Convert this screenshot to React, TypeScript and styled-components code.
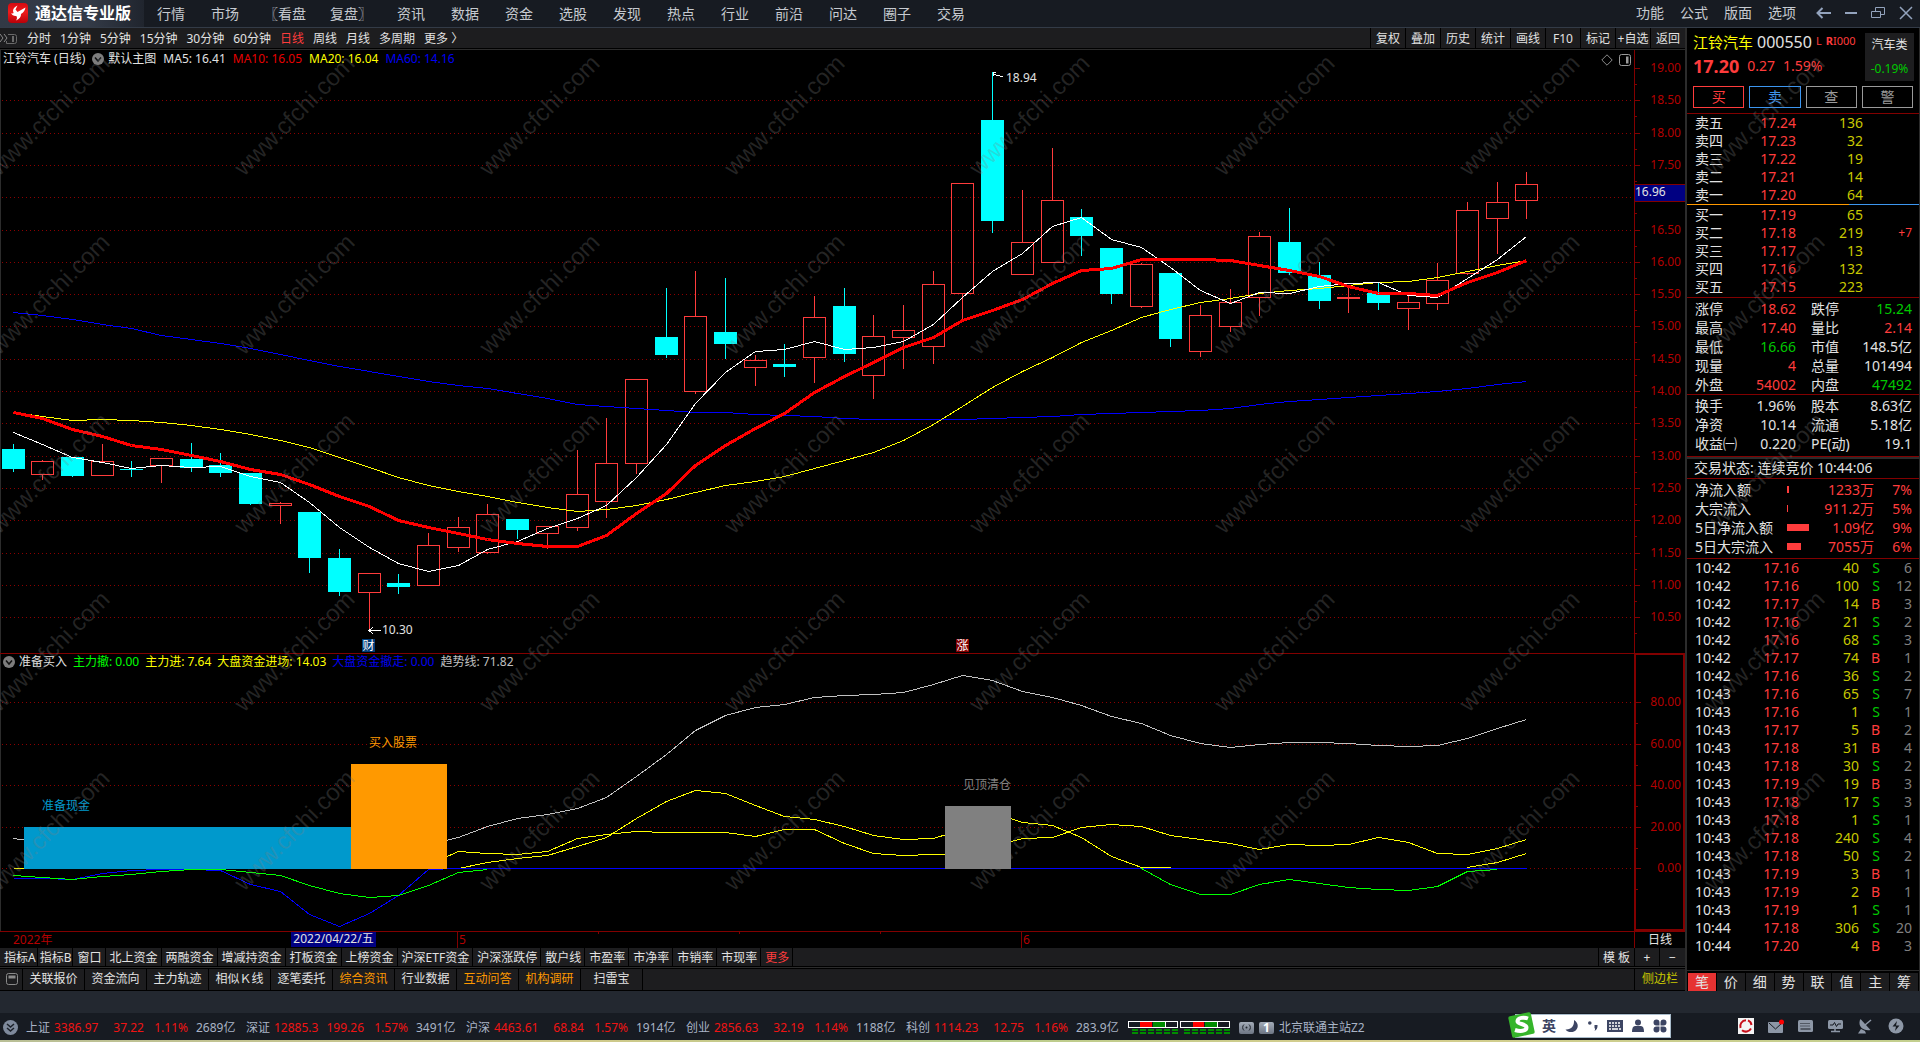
import React from "react";
import styled, { createGlobalStyle, css } from "styled-components";

/* ---------- palette ---------- */
const c = {
  red: "#ff3c3c",
  deepRed: "#b40000",
  rule: "#820000",
  cyan: "#00ffff",
  yellow: "#ffff00",
  olive: "#c8c800",
  green: "#00c800",
  lime: "#00ff00",
  blue: "#0000ff",
  link: "#3c96f0",
  orange: "#ff9900",
  text: "#e2e2e2",
  gray: "#808080",
  panel: "#1d1d1f",
  line: "#2c2c2c",
};

const GlobalStyle = createGlobalStyle`
  * { box-sizing: border-box; }
  html, body { margin: 0; background: #000; }
  body {
    font-family: "Noto Sans", "Noto Sans CJK SC", sans-serif;
    font-size: 12px;
    line-height: 16px;
    color: ${c.text};
  }
  button { font: inherit; color: inherit; background: none; border: 0; padding: 0; margin: 0; white-space: nowrap; cursor: pointer; }
  table { border-collapse: collapse; border-spacing: 0; width: 100%; table-layout: fixed; }
  td, th { padding: 0; font-weight: 400; white-space: nowrap; }
  svg { display: block; }
`;

/* ---------- page frame ---------- */
const Page = styled.div`
  display: flex;
  flex-direction: column;
  min-height: 100vh;
  background: #000;
`;

const TitleBar = styled.header`
  display: flex;
  align-items: stretch;
  height: 28px;
  flex: none;
  background: #171b22;
  border-bottom: 1px solid #333b47;
`;
const Brand = styled.div`
  display: flex;
  align-items: center;
  gap: 7px;
  width: 144px;
  padding: 0 0 2px 8px;
  background: linear-gradient(90deg, #323945, #343b48 60%, #20252e);
  font-size: 16px;
  font-weight: 700;
  color: #fff;
  white-space: nowrap;
`;
const Menu = styled.nav`
  display: flex;
  align-items: center;
  font-size: 14px;
  line-height: 20px;
  color: #c6cad0;
`;
const MenuItem = styled.button<{ $wide?: boolean }>`
  padding: 0 ${(p) => (p.$wide ? 12 : 13)}px;
`;
const RightMenu = styled(Menu)`
  margin-left: auto;
  gap: 16px;
  padding: 0 6px 2px 0;
`;
const WindowButtons = styled.div`
  display: flex;
  align-items: center;
  gap: 12px;
  margin-left: 4px;
  color: #93a3bd;
`;

const Workspace = styled.main`
  position: relative;
  display: flex;
  flex: 1 1 auto;
  min-height: 700px;
`;
const ChartColumn = styled.section`
  display: flex;
  flex-direction: column;
  flex: 1 1 auto;
  min-width: 0;
  border-right: 2px solid ${c.line};
`;

/* ---------- period toolbar ---------- */
const PeriodBar = styled.div`
  display: flex;
  align-items: stretch;
  flex: none;
  height: 22px;
  background: ${c.panel};
  border-bottom: 1px solid ${c.line};
  box-shadow: inset 0 -1px 0 #000;
`;
const Periods = styled.div`
  display: flex;
  align-items: center;
  gap: 9px;
`;
const PeriodIcon = styled.span`
  width: 18px;
`;
const Period = styled.button<{ $on?: boolean }>`
  color: ${(p) => (p.$on ? c.red : c.text)};
`;
const Tools = styled.div`
  display: flex;
  margin-left: auto;
`;
const Tool = styled.button`
  width: 35px;
  border-left: 1px solid #000;
  overflow: hidden;
`;

/* ---------- plots ---------- */
const PlotRow = styled.div<{ $grow: number }>`
  display: flex;
  flex: ${(p) => p.$grow} 1 0;
  min-height: 0;
`;
const Plot = styled.div`
  position: relative;
  flex: 1 1 auto;
  min-width: 0;
  > svg { position: absolute; inset: 0; width: 100%; height: 100%; }
`;
const Legend = styled.div<{ $tight?: boolean }>`
  position: relative;
  display: flex;
  align-items: center;
  gap: ${(p) => (p.$tight ? 6 : 7)}px;
  padding: 1px 3px;
  white-space: nowrap;
`;
const LegendTitle = styled.span`
  display: flex;
  align-items: center;
  gap: 4px;
`;
const Key = styled.span<{ $color?: string }>`
  color: ${(p) => p.$color || c.text};
`;
const LegendTools = styled.div`
  position: absolute;
  top: 4px;
  right: 3px;
  display: flex;
  align-items: center;
  gap: 6px;
`;
const Note = styled.span<{ $color?: string }>`
  position: absolute;
  transform: translateY(-50%);
  color: ${(p) => p.$color || c.text};
  white-space: nowrap;
`;
const Badge = styled.span<{ $bg: string }>`
  position: absolute;
  width: 13px;
  height: 13px;
  line-height: 13px;
  text-align: center;
  background: ${(p) => p.$bg};
  color: #fff;
`;
const Axis = styled.div<{ $boxed?: boolean }>`
  position: relative;
  flex: none;
  width: 51px;
  color: ${c.deepRed};
  border: 0 solid ${c.rule};
  ${(p) => (p.$boxed ? css`border-width: 2px;` : css`border-left-width: 1px;`)}
  > svg { position: absolute; inset: 0; width: 6px; height: 100%; overflow: visible; }
`;
const AxisLabel = styled.span<{ $boxed?: boolean }>`
  position: absolute;
  right: ${(p) => (p.$boxed ? 2 : 4)}px;
  transform: translateY(-50%);
`;
const AxisCursor = styled.span`
  position: absolute;
  left: 0;
  right: 0;
  height: 18px;
  line-height: 14px;
  transform: translateY(-50%);
  background: #000082;
  border: 1px solid ${c.rule};
  border-width: 1px 0;
  color: ${c.text};
`;

const DateRow = styled.div`
  display: flex;
  flex: none;
  height: 17px;
  border-top: 1px solid ${c.rule};
  color: ${c.deepRed};
`;
const DateTrack = styled.div`
  position: relative;
  flex: 1 1 auto;
`;
const DateTick = styled.span<{ $minor?: boolean }>`
  position: absolute;
  top: 0;
  height: ${(p) => (p.$minor ? 2 : 16)}px;
  padding-left: 1px;
  border-left: 1px solid ${c.rule};
`;
const DateText = styled.span`
  position: absolute;
  top: 0;
`;
const DateCursor = styled.span`
  position: absolute;
  top: 0;
  width: 85px;
  height: 15px;
  line-height: 14px;
  text-align: center;
  background: #000082;
  color: ${c.text};
`;
const DateUnit = styled.div`
  width: 51px;
  flex: none;
  border-left: 1px solid ${c.rule};
  color: ${c.text};
  text-align: center;
`;

/* ---------- bottom tab strips ---------- */
const Strip = styled.div<{ $tall?: boolean }>`
  display: flex;
  flex: none;
  height: ${(p) => (p.$tall ? 23 : 20)}px;
  padding-left: 2px;
  border-bottom: 1px solid ${(p) => (p.$tall ? "#000" : c.line)};
  background: ${c.panel};
  box-shadow: inset 0 ${(p) => (p.$tall ? "1px" : "-1px")} 0 #000;
`;
const StripTab = styled.button<{ $color?: string; $pad?: number }>`
  padding: 0 ${(p) => (p.$pad || 4) - 1}px 0 ${(p) => p.$pad || 4}px;
  border-right: 1px solid #000;
  color: ${(p) => p.$color || c.text};
`;
const LinkTab = styled.button<{ $color?: string }>`
  width: 62px;
  border-right: 1px solid #000;
  color: ${(p) => p.$color || c.text};
`;
const IconTab = styled.button`
  display: flex;
  align-items: center;
  justify-content: center;
  width: 21px;
  border-right: 1px solid #000;
`;
const StripEnd = styled.div`
  display: flex;
  margin-left: auto;
`;
const EndTab = styled.button<{ $w: number; $color?: string }>`
  width: ${(p) => p.$w}px;
  border-left: 1px solid #000;
  color: ${(p) => p.$color || c.text};
`;

/* ---------- quote side panel ---------- */
const Side = styled.aside`
  display: flex;
  flex-direction: column;
  flex: none;
  width: 233px;
  font-size: 14px;
  border-right: 1px solid ${c.line};
`;
const QuoteHead = styled.div`
  display: flex;
  justify-content: space-between;
  padding: 5px 5px 0 6px;
`;
const QuoteName = styled.div`
  display: flex;
  align-items: center;
  height: 18px;
  white-space: nowrap;
`;
const StockName = styled.span`
  font-size: 15px;
  color: ${c.yellow};
`;
const StockCode = styled.span`
  margin: 0 4px;
  font-size: 16px;
`;
const Flags = styled.span`
  display: flex;
  gap: 4px;
  padding-bottom: 3px;
  font-size: 11px;
  color: ${c.red};
`;
const QuotePrice = styled.div`
  display: flex;
  align-items: center;
  gap: 8px;
  height: 30px;
  color: ${c.red};
`;
const BigPrice = styled.strong`
  font-size: 18px;
`;
const Sector = styled.div`
  display: flex;
  flex-direction: column;
  justify-content: space-between;
  align-items: center;
  width: 49px;
  height: 48px;
  padding: 4px 0;
  background: ${c.panel};
  font-size: 12px;
`;
const SectorChange = styled.span`
  color: ${c.green};
`;
const Actions = styled.div`
  display: grid;
  grid-template-columns: repeat(4, 1fr);
  gap: 5px;
  padding: 5px 6px;
`;
const Action = styled.button<{ $color: string }>`
  height: 22px;
  line-height: 20px;
  border: 1px solid ${(p) => p.$color};
  color: ${(p) => p.$color};
`;
const Block = styled.div<{ $top?: number; $bottom?: number }>`
  padding: ${(p) => p.$top || 0}px 7px ${(p) => p.$bottom || 0}px 8px;
  border-top: 1px solid ${c.rule};
`;
const BidBlock = styled(Block)`
  border-top: 0;
`;
const Split = styled.div`
  height: 1px;
  background: linear-gradient(90deg, ${c.orange} 70%, ${c.link} 70%);
`;
const Row = styled.tr<{ $h: number }>`
  height: ${(p) => p.$h}px;
`;
const Col = styled.col<{ $w?: number }>`
  width: ${(p) => (p.$w ? `${p.$w}px` : "auto")};
`;
const Label = styled.th`
  text-align: left;
  color: ${c.text};
`;
const Cell = styled.td<{ $color?: string; $left?: boolean }>`
  text-align: ${(p) => (p.$left ? "left" : "right")};
  color: ${(p) => p.$color || c.text};
`;
const SmallCell = styled(Cell)`
  font-size: 12px;
`;
const Status = styled(Block)`
  height: 22px;
  padding: 2px 0 0 7px;
  line-height: 18px;
  box-shadow: inset 0 2px 0 ${c.line};
`;
const FlowBar = styled.span`
  display: block;
  height: 7px;
  background: ${c.red};
`;
const SideTabs = styled.div`
  display: grid;
  grid-template-columns: repeat(8, 1fr);
  gap: 1px;
  height: 21px;
  margin-top: auto;
  padding: 2px 1px 0 1px;
  border-top: 1px solid ${c.line};
`;
const SideTab = styled.button<{ $on?: boolean }>`
  background: ${(p) => (p.$on ? "#e63232" : c.panel)};
  color: ${c.text};
`;

/* ---------- footer ---------- */
const Spacer = styled.div`
  flex: none;
  height: 22px;
  background: #232830;
`;
const StatusBar = styled.footer`
  position: relative;
  display: flex;
  align-items: center;
  flex: none;
  height: 27px;
  padding: 2px 16px 0 3px;
  background: #171b22;
  color: #a9b4c6;
  white-space: nowrap;
`;
const Desktop = styled.div`
  flex: none;
  height: 2px;
  background: linear-gradient(90deg, #b9bf96, #d0c98a 30%, #b6cc8c 50%, #d6cd8d 70%, #c3cf8e);
`;
const IndexGroup = styled.div`
  display: grid;
  grid-template-columns: 28px 48px 42px 44px 50px;
  width: 220px;
`;
const IndexFirst = styled.span`
  margin-right: 8px;
`;
const IndexCell = styled.span<{ $up?: boolean; $right?: boolean; $gap?: boolean }>`
  color: ${(p) => (p.$up ? "#f01414" : "inherit")};
  text-align: ${(p) => (p.$right ? "right" : "left")};
  ${(p) => p.$gap && css`padding-left: 8px;`}
`;
const Meters = styled.span`
  margin: 0 9px 0 2px;
`;
const Chip = styled.span`
  display: inline-flex;
  align-items: center;
  justify-content: center;
  width: 15px;
  height: 12px;
  margin-right: 5px;
  border-radius: 2px;
  background: linear-gradient(#a4acb8, #6d7583);
  color: #fff;
  font-weight: 700;
`;
const Tray = styled.div`
  display: flex;
  align-items: center;
  gap: 14px;
  margin-left: auto;
  padding-bottom: 3px;
`;
const Ime = styled.div`
  position: absolute;
  right: 249px;
  top: 1px;
  display: flex;
  align-items: center;
  gap: 9px;
  height: 24px;
  width: 156px;
  padding-left: 26px;
  background: #fff;
  border: 1px solid #a9bccb;
  color: #3d4563;
  font-size: 14px;
  font-weight: 700;
`;
const ImeLogo = styled.span`
  position: absolute;
  left: -9px;
  top: -4px;
`;
const Watermark = styled.svg`
  position: absolute;
  left: 0;
  top: 22px;
  width: 100%;
  height: 100%;
  pointer-events: none;
  font-family: "Liberation Sans", Arial, sans-serif;
  font-size: 24px;
`;

/* ---------- chart data (canvas units) ---------- */
const STEP = 29.686;
const cx = (i: number) => Math.floor(13 + STEP * i);

type Candle = [up: 0 | 1, top: number, bottom: number, high: number, low: number];
const candles: Candle[] = [
  [0, 449, 469, 444, 472], [1, 461, 475, 460, 480], [0, 457, 476, 457, 477], [1, 461, 476, 444, 476],
  [0, 469, 470, 461, 477], [1, 458, 466, 458, 483], [0, 459, 468, 443, 472], [0, 465, 473, 453, 477],
  [0, 473, 504, 473, 505], [1, 503, 506, 502, 524], [0, 512, 558, 512, 573], [0, 558, 592, 549, 596],
  [1, 573, 593, 573, 630], [0, 583, 587, 574, 594], [1, 545, 586, 533, 586], [1, 527, 548, 517, 552],
  [1, 514, 553, 504, 554], [0, 519, 530, 519, 539], [1, 526, 534, 526, 549], [1, 494, 528, 450, 531],
  [1, 463, 502, 418, 518], [1, 379, 464, 379, 474], [0, 337, 355, 288, 358], [1, 316, 392, 271, 394],
  [0, 332, 344, 278, 359], [1, 360, 368, 355, 386], [0, 364, 367, 344, 377], [1, 317, 358, 296, 383],
  [0, 306, 354, 288, 362], [1, 336, 376, 315, 399], [1, 330, 338, 305, 369], [1, 284, 347, 271, 364],
  [1, 183, 294, 183, 319], [0, 120, 221, 72, 233], [1, 242, 275, 190, 275], [1, 200, 263, 148, 263],
  [0, 217, 236, 209, 256], [0, 248, 294, 248, 304], [1, 264, 307, 263, 308], [0, 273, 339, 273, 347],
  [1, 315, 352, 305, 357], [1, 302, 327, 289, 332], [1, 236, 298, 232, 316], [0, 242, 273, 208, 275],
  [0, 275, 301, 262, 309], [1, 297, 299, 286, 313], [0, 293, 303, 283, 310], [1, 302, 309, 296, 330],
  [1, 280, 304, 263, 310], [1, 210, 274, 202, 275], [1, 202, 219, 182, 254], [1, 184, 201, 172, 219],
];

const ma5 = [432, 444, 457, 462, 468, 465, 467, 466, 476, 482, 502, 527, 547, 563, 571, 565, 549, 541, 528, 518, 505, 477, 444, 403, 372, 351, 349, 341, 349, 347, 341, 324, 297, 271, 253, 226, 217, 239, 247, 267, 290, 303, 292, 293, 286, 283, 282, 295, 297, 278, 259, 236];
const ma10 = [412, 418, 429, 436, 445, 449, 455, 461, 469, 474, 484, 496, 506, 520, 527, 533, 539, 543, 546, 546, 535, 513, 493, 465, 445, 428, 413, 392, 376, 362, 347, 337, 320, 310, 299, 283, 270, 268, 259, 259, 259, 260, 265, 270, 276, 286, 293, 293, 295, 282, 272, 260];
const ma20 = [412, 416, 420, 419, 420, 422, 425, 429, 434, 440, 447, 457, 467, 477, 485, 491, 496, 502, 507, 511, 509, 505, 499, 492, 485, 481, 476, 468, 460, 452, 440, 424, 406, 387, 371, 357, 342, 330, 317, 309, 302, 298, 293, 290, 288, 285, 282, 281, 277, 271, 265, 260];
const ma60 = [312, 315, 319, 324, 328, 335, 339, 343, 348, 354, 360, 366, 371, 376, 381, 385, 388, 393, 398, 404, 406, 408, 410, 412, 412, 414, 415, 416, 418, 419, 419, 419, 419, 418, 417, 416, 414, 413, 412, 411, 410, 408, 404, 401, 399, 397, 395, 393, 391, 388, 384, 381];

const trend = [838, 842, 846, 850, 852, 852, 852, 852, 850, 850, 852, 852, 850, 848, 844, 837, 826, 818, 814, 808, 797, 776, 754, 730, 715, 707, 704, 697, 695, 694, 692, 684, 675, 680, 691, 697, 705, 716, 723, 735, 743, 747, 744, 742, 742, 743, 745, 746, 745, 738, 728, 719];
const inflow = [868, 868, 868, 868, 868, 868, 868, 868, 868, 868, 868, 868, 868, 868, 864, 851, 853, 854, 851, 838, 834, 831, 832, 832, 832, 836, 829, 829, 843, 853, 855, 854, 853, 846, 838, 837, 827, 824, 826, 835, 839, 843, 849, 844, 845, 844, 837, 842, 853, 854, 848, 839];
const market = [868, 862, 858, 855, 846, 837, 818, 801, 790, 793, 805, 816, 819, 826, 835, 839, 838, 829, 812, 822, 825, 837, 856, 867, 867];
const marketTail = [867, 862, 853];
const outA = [875, 877, 879, 876, 874, 871, 869, 869, 872, 875, 885, 893, 897, 895, 885, 872, 869];
const outB = [868, 884, 894, 894, 884, 879, 883, 887, 889, 890, 886, 871, 869];
const marketOut = [878, 878, 879, 873, 870, 869, 869, 870, 884, 891, 914, 926, 913, 895, 869, 868];

const line = (ys: number[], from = 0) =>
  ys.map((y, i) => `${cx(from + i) + 0.5},${y + 0.5}`).join(" ");

const MAIN = { top: 50, h: 603, w: 1634 };
const SUB = { top: 653, h: 278, w: 1634 };
const pct = (v: number) => `${v * 100}%`;
const at = (box: { top: number; h: number; w: number }, x: number, y: number) => ({
  left: pct(x / box.w),
  top: pct((y - box.top) / box.h),
});

const priceTicks = Array.from({ length: 18 }, (_, i) => ({
  label: (19 - i * 0.5).toFixed(2),
  y: Math.round(68 + i * 32.31),
}));
const subTicks = [80, 60, 40, 20, 0].map((v, i) => ({
  label: v.toFixed(2),
  y: Math.round(702 + i * 41.5),
}));

const Grid = ({ ys }: { ys: number[] }) => (
  <g stroke="#8c0000" strokeWidth={1} strokeDasharray="1 3">
    {ys.map((y) => (
      <line key={y} x1={2} x2={1634} y1={y + 0.5} y2={y + 0.5} />
    ))}
  </g>
);

const Curve = ({ ys, from, color, width = 1 }: { ys: number[]; from?: number; color: string; width?: number }) => (
  <polyline points={line(ys, from)} fill="none" stroke={color} strokeWidth={width} vectorEffect="non-scaling-stroke" />
);

const Candles = () => (
  <g>
    {candles.map(([up, top, bottom, high, low], i) => {
      const x = cx(i);
      const color = up ? c.red : c.cyan;
      return (
        <g key={i} stroke={color}>
          {high < top && <line x1={x + 0.5} x2={x + 0.5} y1={high} y2={top} />}
          {low > bottom && <line x1={x + 0.5} x2={x + 0.5} y1={bottom} y2={low} />}
          {up ? (
            <rect x={x - 10.5} y={top + 0.5} width={22} height={Math.max(bottom - top - 1, 1)} fill="none" />
          ) : (
            <rect x={x - 11} y={top} width={23} height={bottom - top} fill={color} stroke="none" />
          )}
        </g>
      );
    })}
  </g>
);

const AxisTicks = ({ ys, top, h, half }: { ys: number[]; top: number; h: number; half: number }) => (
  <svg viewBox={`0 ${top} 6 ${h}`} preserveAspectRatio="none" stroke={c.rule} shapeRendering="crispEdges" aria-hidden="true">
    {ys.map((y) => (
      <g key={y}>
        <line x1={0} x2={5} y1={y + 0.5} y2={y + 0.5} />
        <line x1={0} x2={2} y1={y + half + 0.5} y2={y + half + 0.5} />
      </g>
    ))}
  </svg>
);

/* ---------- icons ---------- */
const Logo = () => (
  <svg width="20" height="20" viewBox="0 0 20 20" aria-hidden="true">
    <defs>
      <linearGradient id="brand" x1="0" y1="0" x2="0" y2="1">
        <stop offset="0" stopColor="#d60a10" />
        <stop offset=".45" stopColor="#ee1c1c" />
        <stop offset="1" stopColor="#b80008" />
      </linearGradient>
    </defs>
    <rect width="20" height="20" rx="4" fill="url(#brand)" />
    <path d="M9.500 2.500 7.500 6.500l2 2.500L17.500 4.500c-.5 3-2 5-4.500 6.500.2 3-1.500 5-5 6.500 1.200-1.800 1.300-3 .3-4.500C6 13.200 4 12.500 3.300 10c1 .5 1.700.5 2.400 0C4 7 6 4 9.500 2.500z" fill="#fff" />
  </svg>
);
const Chevron = () => (
  <svg width="12" height="12" viewBox="0 0 12 12" aria-hidden="true">
    <circle cx="6" cy="6" r="6" fill="#7d7d7d" />
    <path d="M3 4.500 6 8l3-3.500" fill="none" stroke="#111" strokeWidth="1.500" />
  </svg>
);
const ik = "#8d97a6";

/* ---------- content ---------- */
const menu = ["行情", "市场", "〖看盘", "复盘〗", "资讯", "数据", "资金", "选股", "发现", "热点", "行业", "前沿", "问达", "圈子", "交易"];
const periods = ["分时", "1分钟", "5分钟", "15分钟", "30分钟", "60分钟", "日线", "周线", "月线", "多周期", "更多 〉"];
const tools = ["复权", "叠加", "历史", "统计", "画线", "F10", "标记", "+自选", "返回"];
const tabs = ["指标A", "指标B", "窗口", "北上资金", "两融资金", "增减持资金", "打板资金", "上榜资金", "沪深ETF资金", "沪深涨跌停", "散户线", "市盈率", "市净率", "市销率", "市现率", "更多"];
const links = ["关联报价", "资金流向", "主力轨迹", "相似Ｋ线", "逐笔委托", "综合资讯", "行业数据", "互动问答", "机构调研", "扫雷宝"];
const hot = ["综合资讯", "互动问答", "机构调研"];

const asks = [["卖五", "17.24", "136"], ["卖四", "17.23", "32"], ["卖三", "17.22", "19"], ["卖二", "17.21", "14"], ["卖一", "17.20", "64"]];
const bids = [["买一", "17.19", "65"], ["买二", "17.18", "219", "+7"], ["买三", "17.17", "13"], ["买四", "17.16", "132"], ["买五", "17.15", "223"]];

type Stat = [string, string, string | undefined, string, string, string | undefined];
const stats1: Stat[] = [
  ["涨停", "18.62", c.red, "跌停", "15.24", c.green],
  ["最高", "17.40", c.red, "量比", "2.14", c.red],
  ["最低", "16.66", c.green, "市值", "148.5亿", undefined],
  ["现量", "4", c.red, "总量", "101494", undefined],
  ["外盘", "54002", c.red, "内盘", "47492", c.green],
];
const stats2: Stat[] = [
  ["换手", "1.96%", undefined, "股本", "8.63亿", undefined],
  ["净资", "10.14", undefined, "流通", "5.18亿", undefined],
  ["收益㈠", "0.220", undefined, "PE(动)", "19.1", undefined],
];
const flows: [string, number, string, string][] = [
  ["净流入额", 2, "1233万", "7%"],
  ["大宗流入", 1, "911.2万", "5%"],
  ["5日净流入额", 22, "1.09亿", "9%"],
  ["5日大宗流入", 14, "7055万", "6%"],
];
const trades: [string, string, number, string, number][] = [
  ["10:42", "17.16", 40, "S", 6], ["10:42", "17.16", 100, "S", 12], ["10:42", "17.17", 14, "B", 3],
  ["10:42", "17.16", 21, "S", 2], ["10:42", "17.16", 68, "S", 3], ["10:42", "17.17", 74, "B", 1],
  ["10:42", "17.16", 36, "S", 2], ["10:43", "17.16", 65, "S", 7], ["10:43", "17.16", 1, "S", 1],
  ["10:43", "17.17", 5, "B", 2], ["10:43", "17.18", 31, "B", 4], ["10:43", "17.18", 30, "S", 2],
  ["10:43", "17.19", 19, "B", 3], ["10:43", "17.18", 17, "S", 3], ["10:43", "17.18", 1, "S", 1],
  ["10:43", "17.18", 240, "S", 4], ["10:43", "17.18", 50, "S", 2], ["10:43", "17.19", 3, "B", 1],
  ["10:43", "17.19", 2, "B", 1], ["10:43", "17.19", 1, "S", 1], ["10:44", "17.18", 306, "S", 20],
  ["10:44", "17.20", 4, "B", 3],
];
const indices = [
  ["上证", "3386.97", "37.22", "1.11%", "2689亿"],
  ["深证", "12885.3", "199.26", "1.57%", "3491亿"],
  ["沪深", "4463.61", "68.84", "1.57%", "1914亿"],
  ["创业", "2856.63", "32.19", "1.14%", "1188亿"],
  ["科创", "1114.23", "12.75", "1.16%", "283.9亿"],
];

const BookTable = ({ rows }: { rows: string[][] }) => (
  <table>
    <colgroup><Col $w={44} /><Col $w={57} /><Col $w={67} /><Col /></colgroup>
    <tbody>
      {rows.map(([n, p, v, d]) => (
        <Row key={n} $h={18}>
          <Label scope="row">{n}</Label>
          <Cell $color={c.red}>{p}</Cell>
          <Cell $color={c.olive}>{v}</Cell>
          <SmallCell $color={c.red}>{d}</SmallCell>
        </Row>
      ))}
    </tbody>
  </table>
);

const StatTable = ({ rows }: { rows: Stat[] }) => (
  <table>
    <colgroup><Col $w={50} /><Col $w={51} /><Col $w={15} /><Col $w={46} /><Col /></colgroup>
    <tbody>
      {rows.map(([a, av, ac, b, bv, bc]) => (
        <Row key={a} $h={19}>
          <Label scope="row">{a}</Label>
          <Cell $color={ac}>{av}</Cell>
          <td />
          <Label scope="row">{b}</Label>
          <Cell $color={bc}>{bv}</Cell>
        </Row>
      ))}
    </tbody>
  </table>
);

const Meter = ({ x, a }: { x: number; a: number }) => (
  <g transform={`translate(${x} 0)`}>
    <rect x=".5" y=".5" width="49" height="6" fill="#171b22" stroke="#fff" />
    <rect x={a} y="1" width={24 - a} height="5" fill="#f00" />
    <rect x="25" y="1" width="12" height="5" fill="#008c00" />
    <rect x="37" y="1" width="1" height="5" fill="#fff" />
    {[0, 1, 2, 3, 4, 5].map((i) => (
      <g key={i} fill="#008c00">
        <rect x={4 + i * 8} y="8" width="6" height="2" />
        <rect x={4 + i * 8} y="11" width="6" height="2" />
      </g>
    ))}
  </g>
);

export default function App() {
  return (
    <Page>
      <GlobalStyle />
      <TitleBar>
        <Brand><Logo />通达信专业版</Brand>
        <Menu>
          {menu.map((m) => <MenuItem key={m} $wide={m.length > 2}>{m}</MenuItem>)}
        </Menu>
        <RightMenu>
          {["功能", "公式", "版面", "选项"].map((m) => <button key={m}>{m}</button>)}
          <WindowButtons>
            <button aria-label="返回"><svg width="16" height="16" viewBox="0 0 16 16" fill="none" stroke="currentColor" strokeWidth="2"><path d="M1 8h14M6.500 3l-5 5 5 5" /></svg></button>
            <button aria-label="最小化"><svg width="14" height="16" viewBox="0 0 14 16" fill="none" stroke="currentColor" strokeWidth="2"><path d="M1 8h12" /></svg></button>
            <button aria-label="还原"><svg width="16" height="16" viewBox="0 0 16 16" fill="none" stroke="currentColor"><path d="M1.500 6.500h9v6h-9zM5.500 6V2.500h9v7H11" /></svg></button>
            <button aria-label="关闭"><svg width="16" height="16" viewBox="0 0 16 16" fill="none" stroke="currentColor" strokeWidth="1.500"><path d="M2 2l12 12M14 2 2 14" /></svg></button>
          </WindowButtons>
        </RightMenu>
      </TitleBar>

      <Workspace>
        <ChartColumn>
          <PeriodBar>
            <Periods>
              <PeriodIcon>
                <svg width="18" height="14" viewBox="0 0 18 14" fill="none" stroke="#8a8a8a" aria-hidden="true">
                  <path d="M0 2l3 4-3 4M4 2l3 4-3 4" />
                  <path d="M8 2.500h6.500a2 2 0 0 1 2 2v5a2 2 0 0 1-2 2H6.500V9" stroke="#6a6a6a" />
                  <path d="M12 4h2v6h-2z" fill="#6a6a6a" stroke="none" />
                </svg>
              </PeriodIcon>
              {periods.map((p) => <Period key={p} $on={p === "日线"}>{p}</Period>)}
            </Periods>
            <Tools>{tools.map((t) => <Tool key={t}>{t}</Tool>)}</Tools>
          </PeriodBar>

          <PlotRow $grow={603}>
            <Plot>
              <svg viewBox="0 50 1634 603" preserveAspectRatio="none" shapeRendering="crispEdges" aria-hidden="true">
                <Grid ys={priceTicks.slice(1).map((t) => t.y)} />
                <line x1=".5" x2=".5" y1="50" y2="653" stroke={c.line} />
                <Candles />
                <Curve ys={ma60} color={c.blue} />
                <Curve ys={ma20} color={c.yellow} />
                <Curve ys={ma5} color="#fff" />
                <Curve ys={ma10} color="#f00" width={3} />
                <g stroke="#fff" fill="none">
                  <path d="M1003 77l-10-3M993 76v-3M993 72h3" />
                  <path d="M370 630.500h11M373 627l-4 3.500 4 3.500" />
                </g>
              </svg>
              <Legend>
                <Key>江铃汽车 (日线)</Key>
                <LegendTitle><Chevron /><Key>默认主图</Key></LegendTitle>
                <Key>MA5: 16.41</Key>
                <Key $color="#e60000">MA10: 16.05</Key>
                <Key $color={c.yellow}>MA20: 16.04</Key>
                <Key $color="#0000f0">MA60: 14.16</Key>
              </Legend>
              <LegendTools>
                <svg width="12" height="12" viewBox="0 0 12 12" fill="none" stroke="#8a8a8a" aria-hidden="true"><path d="M6 .8 11.200 6 6 11.200.8 6z" /></svg>
                <svg width="12" height="12" viewBox="0 0 12 12" fill="none" stroke="#9a9a9a" aria-hidden="true"><rect x=".5" y=".5" width="11" height="11" rx="2" /><path d="M7 2.500h2.500v7H7z" fill="#9a9a9a" stroke="none" /></svg>
              </LegendTools>
              <Note style={at(MAIN, 1006, 78)}>18.94</Note>
              <Note style={at(MAIN, 382, 630)}>10.30</Note>
              <Badge $bg="#003c78" style={at(MAIN, 362, 639)}>财</Badge>
              <Badge $bg="#820000" style={at(MAIN, 956, 639)}>涨</Badge>
            </Plot>
            <Axis>
              <AxisTicks ys={priceTicks.map((t) => t.y)} top={50} h={603} half={16} />
              {priceTicks.filter((t) => t.label !== "17.00").map((t) => (
                <AxisLabel key={t.label} style={{ top: pct((t.y - 50) / 603) }}>{t.label}</AxisLabel>
              ))}
              <AxisCursor style={{ top: pct((193 - 50) / 603) }}>16.96</AxisCursor>
            </Axis>
          </PlotRow>

          <PlotRow $grow={278}>
            <Plot>
              <svg viewBox="0 653 1634 278" preserveAspectRatio="none" shapeRendering="crispEdges" aria-hidden="true">
                <line x1="0" x2="1634" y1="653.500" y2="653.500" stroke={c.rule} />
                <line x1=".5" x2=".5" y1="654" y2="931" stroke={c.line} />
                <Grid ys={subTicks.map((t) => t.y)} />
                <Curve ys={trend} color="#c0c0c0" />
                <Curve ys={inflow} color={c.yellow} />
                <Curve ys={market} from={15} color={c.yellow} />
                <Curve ys={marketOut} color={c.blue} />
                <line x1="447" x2="1527" y1="868.500" y2="868.500" stroke={c.blue} />
                <Curve ys={marketTail} from={49} color={c.yellow} />
                <Curve ys={outA} color={c.lime} />
                <Curve ys={outB} from={38} color={c.lime} />
                <rect x="24" y="827" width="327" height="42" fill="#0099cc" />
                <rect x="351" y="764" width="96" height="105" fill={c.orange} />
                <rect x="945" y="806" width="66" height="63" fill={c.gray} />
              </svg>
              <Legend $tight>
                <LegendTitle><Chevron /><Key>准备买入</Key></LegendTitle>
                <Key $color={c.lime}>主力撤: 0.00</Key>
                <Key $color={c.yellow}>主力进: 7.64</Key>
                <Key $color={c.yellow}>大盘资金进场: 14.03</Key>
                <Key $color="#0000f0">大盘资金撤走: 0.00</Key>
                <Key $color="#c0c0c0">趋势线: 71.82</Key>
              </Legend>
              <Note $color="#0099cc" style={at(SUB, 42, 806)}>准备现金</Note>
              <Note $color={c.orange} style={at(SUB, 369, 743)}>买入股票</Note>
              <Note $color={c.gray} style={at(SUB, 963, 785)}>见顶清仓</Note>
            </Plot>
            <Axis $boxed>
              <AxisTicks ys={subTicks.map((t) => t.y)} top={655} h={274} half={21} />
              {subTicks.map((t) => (
                <AxisLabel key={t.label} $boxed style={{ top: pct((t.y - 655) / 274) }}>{t.label}</AxisLabel>
              ))}
            </Axis>
          </PlotRow>

          <DateRow>
            <DateTrack>
              <DateText style={{ left: pct(13 / 1634) }}>2022年</DateText>
              <DateCursor style={{ left: pct(291 / 1634) }}>2022/04/22/五</DateCursor>
              <DateTick style={{ left: pct(457 / 1634) }}>5</DateTick>
              <DateTick $minor style={{ left: pct(598 / 1634) }} />
              <DateTick $minor style={{ left: pct(739 / 1634) }} />
              <DateTick $minor style={{ left: pct(880 / 1634) }} />
              <DateTick style={{ left: pct(1021 / 1634) }}>6</DateTick>
            </DateTrack>
            <DateUnit>日线</DateUnit>
          </DateRow>

          <Strip>
            {tabs.map((t) => (
              <StripTab key={t} $pad={t.startsWith("指标") ? 2 : 4} $color={t === "更多" ? c.red : undefined}>{t}</StripTab>
            ))}
            <StripEnd>
              <EndTab $w={36}>模 板</EndTab>
              <EndTab $w={25}>+</EndTab>
              <EndTab $w={26}>−</EndTab>
            </StripEnd>
          </Strip>
          <Strip $tall>
            <IconTab aria-label="面板">
              <svg width="12" height="12" viewBox="0 0 12 12" fill="none" stroke="#8a8a8a"><rect x=".5" y=".5" width="11" height="11" rx="2" /><path d="M2.500 2.500h7v3h-7z" fill="#8a8a8a" stroke="none" /></svg>
            </IconTab>
            {links.map((t) => <LinkTab key={t} $color={hot.includes(t) ? c.orange : undefined}>{t}</LinkTab>)}
            <StripEnd><EndTab $w={51} $color={c.olive}>侧边栏</EndTab></StripEnd>
          </Strip>
        </ChartColumn>

        <Side>
          <QuoteHead>
            <div>
              <QuoteName>
                <StockName>江铃汽车</StockName>
                <StockCode>000550</StockCode>
                <Flags><span>L</span><span><b>R</b>I000</span></Flags>
              </QuoteName>
              <QuotePrice><BigPrice>17.20</BigPrice><span>0.27</span><span>1.59%</span></QuotePrice>
            </div>
            <Sector><span>汽车类</span><SectorChange>-0.19%</SectorChange></Sector>
          </QuoteHead>
          <Actions>
            <Action $color={c.red}>买</Action>
            <Action $color={c.link}>卖</Action>
            <Action $color="#9a9a9a">查</Action>
            <Action $color="#9a9a9a">警</Action>
          </Actions>
          <Block><BookTable rows={asks} /></Block>
          <Split />
          <BidBlock $top={1} $bottom={1}><BookTable rows={bids} /></BidBlock>
          <Block $top={1}><StatTable rows={stats1} /></Block>
          <Block $top={1} $bottom={3}><StatTable rows={stats2} /></Block>
          <Status>交易状态: 连续竞价 10:44:06</Status>
          <Block $top={1} $bottom={2}>
            <table>
              <colgroup><Col $w={92} /><Col $w={30} /><Col $w={57} /><Col /></colgroup>
              <tbody>
                {flows.map(([n, w, v, p]) => (
                  <Row key={n} $h={19}>
                    <Label scope="row">{n}</Label>
                    <Cell $left><FlowBar style={{ width: w }} /></Cell>
                    <Cell $color={c.red}>{v}</Cell>
                    <Cell $color={c.red}>{p}</Cell>
                  </Row>
                ))}
              </tbody>
            </table>
          </Block>
          <Block>
            <table>
              <colgroup><Col $w={50} /><Col $w={54} /><Col $w={60} /><Col $w={21} /><Col /></colgroup>
              <tbody>
                {trades.map(([t, p, v, s, n], i) => (
                  <Row key={i} $h={18}>
                    <Cell $left>{t}</Cell>
                    <Cell $color={c.red}>{p}</Cell>
                    <Cell $color={c.olive}>{v}</Cell>
                    <Cell $color={s === "S" ? c.green : c.red}>{s}</Cell>
                    <Cell $color={c.gray}>{n}</Cell>
                  </Row>
                ))}
              </tbody>
            </table>
          </Block>
          <SideTabs>
            {["笔", "价", "细", "势", "联", "值", "主", "筹"].map((t, i) => <SideTab key={t} $on={i === 0}>{t}</SideTab>)}
          </SideTabs>
        </Side>

        <Watermark aria-hidden="true" fill="#808080" fillOpacity=".28">
          {[0, 1, 2, 3, 4].map((r) =>
            [0, 1, 2, 3, 4, 5, 6, 7].map((k) => (
              <text key={`${r}-${k}`} transform={`translate(${k * 245 - 1} ${Math.round(127 + r * 178.75)}) rotate(-45)`}>www.cfchi.com</text>
            ))
          )}
        </Watermark>
      </Workspace>

      <Spacer />
      <StatusBar>
        <IndexFirst>
          <svg width="15" height="15" viewBox="0 0 15 15" aria-hidden="true"><circle cx="7.500" cy="7.500" r="7.500" fill="#7f8a9c" /><path d="M4 4l3.500 3L11 4M4 8l3.500 3L11 8" fill="none" stroke="#1b2029" strokeWidth="1.500" /></svg>
        </IndexFirst>
        {indices.map(([n, p, d, r, v]) => (
          <IndexGroup key={n}>
            <IndexCell>{n}</IndexCell>
            <IndexCell $up>{p}</IndexCell>
            <IndexCell $up $right>{d}</IndexCell>
            <IndexCell $up $right>{r}</IndexCell>
            <IndexCell $gap>{v}</IndexCell>
          </IndexGroup>
        ))}
        <Meters>
          <svg width="102" height="13" viewBox="0 0 102 13" shapeRendering="crispEdges" aria-hidden="true"><Meter x={0} a={12} /><Meter x={52} a={13} /></svg>
        </Meters>
        <Chip><svg width="11" height="9" viewBox="0 0 11 9" fill="none" stroke="#20252d" aria-hidden="true"><path d="M3 1.500a4 4 0 0 0 0 6M8 1.500a4 4 0 0 1 0 6" /><circle cx="5.500" cy="4.500" r="1" fill="#20252d" stroke="none" /></svg></Chip>
        <Chip>1</Chip>
        <span>北京联通主站Z2</span>
        <Ime>
          <ImeLogo>
            <svg width="29" height="28" viewBox="0 0 29 28" aria-hidden="true">
              <rect x="3" y="3" width="23" height="22" rx="2" fill="#35b52a" transform="rotate(-12 14.500 14)" />
              <path d="M21 7.500c-4-1.500-10-1-10.500 2.500-.5 3.500 9 2.500 9 6.500 0 4-7 4-11.500 2.500" fill="none" stroke="#fff" strokeWidth="4" />
            </svg>
          </ImeLogo>
          <span>英</span>
          <svg width="14" height="14" viewBox="0 0 14 14" fill="#3d4563" aria-hidden="true"><path d="M9 1c5 3 5 9 0 11.500C6 13.800 2.500 13 .5 10.500 6 11 9.500 7 9 1z" /></svg>
          <svg width="10" height="14" viewBox="0 0 10 14" fill="#3d4563" aria-hidden="true"><circle cx="1.800" cy="4" r="1.800" /><path d="M6.500 6h3c.3 3-.8 5-3 6 .8-1.500.8-2.500 0-3z" /></svg>
          <svg width="16" height="14" viewBox="0 0 16 14" fill="#3d4563" aria-hidden="true"><path d="M0 1h16v12H0z" /><path d="M2 4h12M2 7h12" stroke="#fff" strokeWidth="1.500" strokeDasharray="2 1" /><path d="M2 10h2M5 10h6M12 10h2" stroke="#fff" strokeWidth="1.500" /></svg>
          <svg width="12" height="14" viewBox="0 0 12 14" fill="#3d4563" aria-hidden="true"><circle cx="6" cy="3.500" r="3" /><path d="M0 13c0-4 1-6 3-6h6c2 0 3 2 3 6z" /></svg>
          <svg width="14" height="14" viewBox="0 0 14 14" fill="#3d4563" aria-hidden="true"><path d="M.5 3.500a3 3 0 1 1 6 0v3h-3a3 3 0 0 1-3-3zM7.500 6.500v-3a3 3 0 1 1 3 3zM6.500 7.500v3a3 3 0 1 1-3-3zM7.500 7.500h3a3 3 0 1 1-3 3z" /></svg>
        </Ime>
        <Tray>
          <svg width="16" height="16" viewBox="0 0 16 16" aria-hidden="true"><rect width="16" height="16" fill="#f4f4f4" /><path d="M2.500 10A6 6 0 0 1 8 2.200M10 2.400A6 6 0 0 1 13.500 7M13 10.500a6 6 0 0 1-9 1.800" fill="none" stroke="#c8101c" strokeWidth="2" /></svg>
          <svg width="16" height="16" viewBox="0 0 16 16" aria-hidden="true"><rect y="4" width="15" height="11" rx="1" fill={ik} /><path d="M1 5l6.500 6L14 5" fill="none" stroke="#171b22" /><circle cx="13.500" cy="4" r="2.500" fill="#f00" /></svg>
          <svg width="16" height="16" viewBox="0 0 16 16" aria-hidden="true"><rect y="2" width="15" height="12" rx="1.500" fill={ik} /><path d="M2.500 5.500h10M2.500 8h10" stroke="#171b22" strokeDasharray="1 1" /><path d="M2.500 11h10" stroke="#171b22" /></svg>
          <svg width="16" height="16" viewBox="0 0 16 16" aria-hidden="true"><rect y="2" width="15" height="9" rx="1.500" fill={ik} /><path d="M2 7h3l1.500-2.500L8.500 8.500 10 6h3" fill="none" stroke="#171b22" /><path d="M7 11v2M3 13.500h9" stroke={ik} strokeWidth="1.500" /></svg>
          <svg width="16" height="16" viewBox="0 0 16 16" fill={ik} aria-hidden="true"><path d="M2.500 1C-.5 6 3 13.500 12.500 12z" /><path d="M7 7l6-5" stroke={ik} strokeWidth="1.500" /><path d="M0 15.500l3-4.500 4 2 1 2.500z" /></svg>
          <svg width="16" height="16" viewBox="0 0 16 16" aria-hidden="true"><circle cx="8" cy="8" r="7.500" fill={ik} /><path d="M9 3 4.500 8.500H8L7 13l4.500-5.500H8z" fill="#171b22" /></svg>
        </Tray>
      </StatusBar>
      <Desktop />
    </Page>
  );
}
